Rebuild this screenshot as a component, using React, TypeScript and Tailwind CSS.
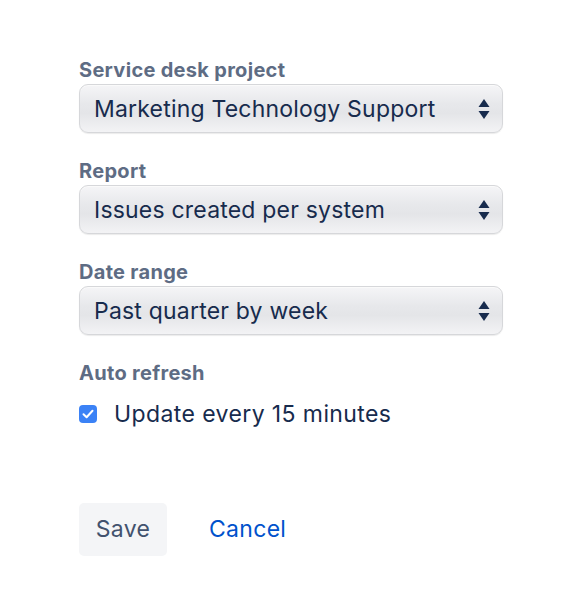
import { ReactNode } from "react";

const font = { fontFamily: "Inter, 'Noto Sans', sans-serif" };

function Arrows() {
  return (
    <svg width="12" height="22" viewBox="0 0 12 22" className="shrink-0">
      <path d="M6 1 L11.5 9 L0.5 9 Z" fill="#172b4d" />
      <path d="M6 21 L11.5 13 L0.5 13 Z" fill="#172b4d" />
    </svg>
  );
}

function Field({ label, children }: { label: string; children: ReactNode }) {
  return (
    <div className="flex flex-col">
      <label className="text-[20px] font-bold leading-6 tracking-[0.3px] text-[#5e6c84] mb-[2px]">{label}</label>
      {children}
    </div>
  );
}

function Select({ value }: { value: string }) {
  return (
    <div className="w-[424px] h-[49px] rounded-[9px] border border-[#d6d7da] bg-[linear-gradient(to_bottom,#f5f5f7_0%,#e7e8eb_40%,#e4e5e8_60%,#f3f3f5_100%)] shadow-[inset_0_1px_0_#fafafa,0_1px_1px_rgba(0,0,0,0.08)] flex items-center justify-between pl-[14px] pr-[12px]">
      <span className="text-[23px] text-[#172b4d] tracking-[0.2px] pt-[2px]">{value}</span>
      <Arrows />
    </div>
  );
}

export default function App() {
  return (
    <div className="w-[576px] h-[610px] bg-white pl-[79px] pt-[58px]" style={font}>
      <div className="flex flex-col gap-[26px]">
        <Field label="Service desk project">
          <Select value="Marketing Technology Support" />
        </Field>
        <Field label="Report">
          <Select value="Issues created per system" />
        </Field>
        <Field label="Date range">
          <Select value="Past quarter by week" />
        </Field>
        <Field label="Auto refresh">
          <div className="flex items-center gap-[17px] mt-[10px]">
            <span className="w-[18px] h-[18px] rounded-[4px] bg-[#3b82f6] flex items-center justify-center">
              <svg width="12" height="10" viewBox="0 0 12 10">
                <path d="M1.5 5.2 L4.6 8.2 L10.5 1.8" stroke="white" strokeWidth="2" fill="none" strokeLinecap="round" strokeLinejoin="round" />
              </svg>
            </span>
            <span className="text-[23px] text-[#172b4d] tracking-[0.4px]">Update every 15 minutes</span>
          </div>
        </Field>
      </div>
      <div className="flex items-center gap-[42px] mt-[71px]">
        <button className="w-[88px] h-[53px] rounded-[5px] bg-[#f4f5f7] text-[23px] tracking-[0.3px] text-[#42526e]">Save</button>
        <button className="text-[23px] tracking-[0.3px] text-[#0052cc]">Cancel</button>
      </div>
    </div>
  );
}
